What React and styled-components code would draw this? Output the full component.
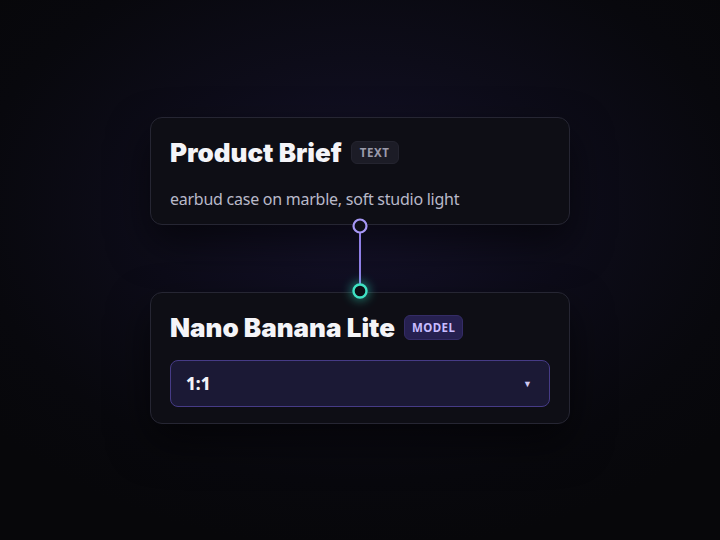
import React from "react";
import styled, { createGlobalStyle } from "styled-components";

const Global = createGlobalStyle`
  html, body { margin: 0; padding: 0; }
  body {
    width: 720px; height: 540px; overflow: hidden;
    background: #07070b;
    font-family: "Noto Sans", "Open Sans", sans-serif;
  }
`;

const Stage = styled.div`
  width: 720px;
  height: 540px;
  display: flex;
  align-items: center;
  justify-content: center;
  background:
    radial-gradient(ellipse 480px 340px at 360px 210px, #15122b 0%, #0d0c19 45%, #08080d 80%, #07070a 100%);
`;

const Stack = styled.div`
  width: 420px;
  display: flex;
  flex-direction: column;
`;

const Card = styled.div`
  box-sizing: border-box;
  height: ${(p) => p.$h}px;
  background: #0e0e15;
  border: 1px solid #262633;
  border-radius: 12px;
  padding: ${(p) => p.$pad};
  display: flex;
  flex-direction: column;
  gap: ${(p) => p.$gap}px;
  box-shadow: 0 18px 40px rgba(0, 0, 0, 0.55);
`;

const Header = styled.div`
  display: flex;
  align-items: center;
  gap: 9px;
`;

const Title = styled.h2`
  margin: 0;
  font-family: "Inter", "Noto Sans", sans-serif;
  font-size: 26px;
  line-height: 34px;
  font-weight: 900;
  letter-spacing: 0;
  color: #f4f4f8;
`;

const Badge = styled.span`
  box-sizing: border-box;
  height: ${(p) => (p.$accent ? 25 : 23)}px;
  padding: 0 ${(p) => (p.$accent ? 7 : 8)}px;
  display: inline-flex;
  align-items: center;
  border-radius: 6px;
  font-size: 11.5px;
  font-weight: 700;
  letter-spacing: ${(p) => (p.$accent ? 0.4 : 0.6)}px;
  background: ${(p) => (p.$accent ? "#262050" : "#1c1c26")};
  color: ${(p) => (p.$accent ? "#c8bcff" : "#9b9bab")};
  border: 1px solid ${(p) => (p.$accent ? "#342c66" : "#24242f")};
`;

const Body = styled.p`
  margin: 0;
  font-size: 16px;
  line-height: 22px;
  letter-spacing: -0.25px;
  color: #b9b9c9;
`;

const Connector = styled.div`
  position: relative;
  height: 67px;
`;

const Wire = styled.svg`
  position: absolute;
  left: 50%;
  top: -12px;
  transform: translateX(-50%);
  overflow: visible;
  z-index: 2;
`;

const Select = styled.div`
  box-sizing: border-box;
  height: 47px;
  border-radius: 8px;
  background: #1b1935;
  border: 1px solid #463b86;
  display: flex;
  align-items: center;
  justify-content: space-between;
  padding: 0 17px 0 15px;
  color: #f2f2f8;
  font-size: 17px;
  font-weight: 800;
`;

const Caret = styled.span`
  font-size: 9px;
  color: #cfc8f0;
`;

export default function App() {
  return (
    <>
      <Global />
      <Stage>
        <Stack>
          <Card $h={108} $pad="18px 20px 14px 19px" $gap={18}>
            <Header>
              <Title>Product Brief</Title>
              <Badge>TEXT</Badge>
            </Header>
            <Body>earbud case on marble, soft studio light</Body>
          </Card>
          <Connector>
            <Wire width="24" height="90" viewBox="0 0 24 90">
              <defs>
                <filter id="glow" x="-150%" y="-150%" width="400%" height="400%">
                  <feGaussianBlur stdDeviation="5" />
                </filter>
              </defs>
              <line x1="12" y1="20" x2="12" y2="71" stroke="#8f7fe6" strokeWidth="2" />
              <circle cx="12" cy="13" r="6.5" fill="#0e0e18" stroke="#a697f5" strokeWidth="2.2" />
              <circle cx="12" cy="78" r="10" fill="#2fd8b8" opacity="0.45" filter="url(#glow)" />
              <circle cx="12" cy="78" r="6.5" fill="#0c0f14" stroke="#3fe2c3" strokeWidth="2.4" />
            </Wire>
          </Connector>
          <Card $h={132} $pad="18px 19px 16px 19px" $gap={15}>
            <Header>
              <Title>Nano Banana Lite</Title>
              <Badge $accent>MODEL</Badge>
            </Header>
            <Select>
              <span>1:1</span>
              <Caret>▼</Caret>
            </Select>
          </Card>
        </Stack>
      </Stage>
    </>
  );
}
